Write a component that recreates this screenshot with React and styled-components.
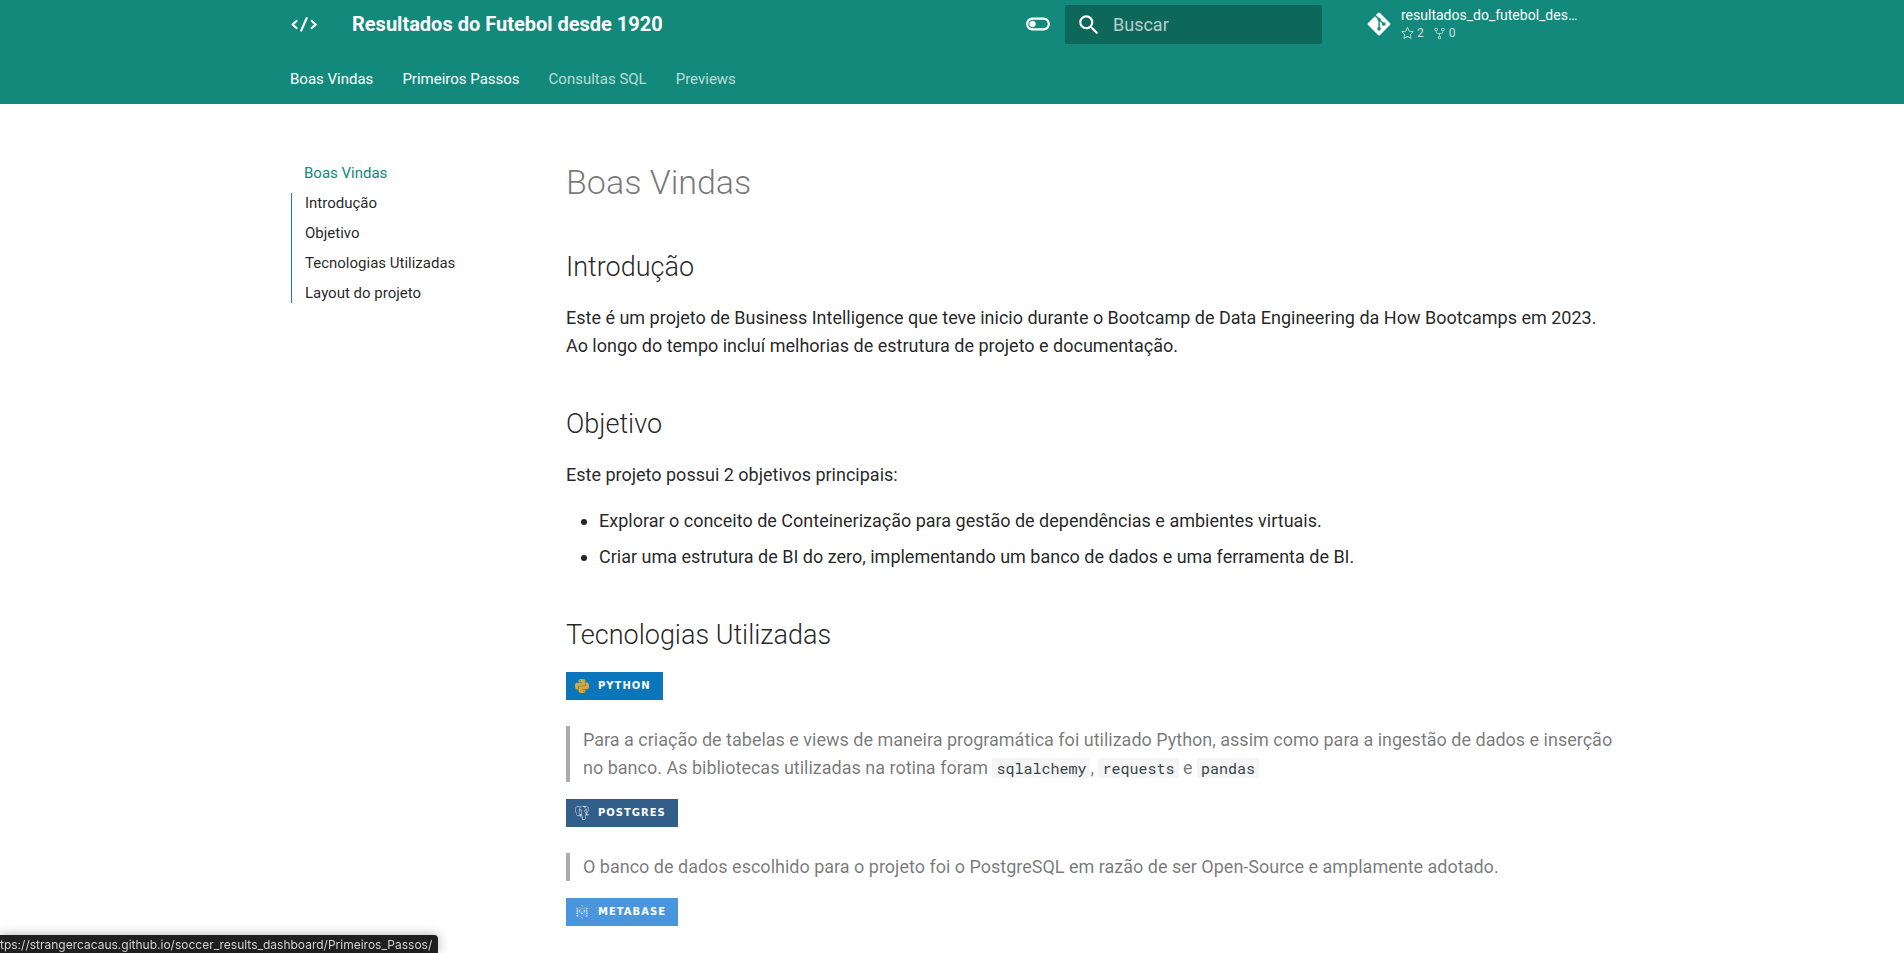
import React from "react";
import styled, { createGlobalStyle } from "styled-components";
import { FaGitAlt } from "react-icons/fa";
import { GoStar, GoRepoForked } from "react-icons/go";
import { SiPython, SiPostgresql, SiMetabase } from "react-icons/si";
import { MdSearch } from "react-icons/md";

const TEAL = "#12897a";

const GlobalStyle = createGlobalStyle`
  *, *::before, *::after { box-sizing: border-box; }
  html, body { height: 100%; }
  body {
    margin: 0;
    overflow: hidden;
    background: #fff;
    color: rgba(0, 0, 0, 0.87);
    font-family: Roboto, "Liberation Sans", sans-serif;
    font-size: 18px;
    line-height: 28px;
    -webkit-font-smoothing: antialiased;
  }
  a { color: inherit; text-decoration: none; }
  ul { margin: 0; padding: 0; }
`;

const Header = styled.header`
  background: ${TEAL};
  color: #fff;
`;

const Grid = styled.div`
  max-width: 1342px;
  margin: 0 auto;
`;

const TopBar = styled(Grid)`
  display: flex;
  align-items: center;
  height: 48px;
  padding-left: 9px;
`;

const Logo = styled.a`
  display: flex;
  width: 62px;
`;

const SiteTitle = styled.span`
  flex: 1;
  font-size: 20px;
  font-weight: 700;
`;

const IconButton = styled.button`
  display: flex;
  padding: 0;
  margin-right: 14px;
  border: 0;
  background: none;
  color: inherit;
  cursor: pointer;
`;

const Search = styled.label`
  display: flex;
  align-items: center;
  gap: 11px;
  width: 257px;
  height: 39px;
  margin-top: 1px;
  padding: 0 11px;
  border-radius: 2px;
  background: #0d675a;
`;

const SearchInput = styled.input`
  min-width: 0;
  flex: 1;
  padding: 0;
  border: 0;
  outline: 0;
  background: none;
  color: #fff;
  font: inherit;
  &::placeholder { color: rgba(255, 255, 255, 0.7); opacity: 1; }
`;

const Source = styled.a`
  display: flex;
  align-items: center;
  gap: 9px;
  width: 257px;
  margin-left: 44px;
`;

const SourceText = styled.span`
  display: grid;
  width: 183px;
  font-size: 14px;
  line-height: 18px;
`;

const RepoName = styled.span`
  overflow: hidden;
  white-space: nowrap;
  text-overflow: ellipsis;
`;

const Facts = styled.span`
  display: flex;
  gap: 9px;
  font-size: 12px;
  opacity: 0.75;
`;

const Fact = styled.span`
  display: flex;
  align-items: center;
  gap: 3px;
`;

const Tabs = styled(Grid).attrs({ as: "nav" })`
  display: flex;
  gap: 29px;
  height: 56px;
  padding: 16px 9px 0;
  font-size: 15px;
  line-height: 30px;
`;

const Tab = styled.a`
  opacity: ${(p) => (p.$bright ? 1 : 0.7)};
`;

const Main = styled(Grid)`
  display: flex;
`;

const Sidebar = styled.nav`
  flex: none;
  width: 266px;
  padding: 59px 10px 0;
  font-size: 15px;
  line-height: 20px;
`;

const Current = styled.a`
  display: block;
  margin: 0 0 10px 13px;
  color: ${TEAL};
`;

const Toc = styled.ul`
  display: grid;
  gap: 10px;
  padding-left: 13px;
  border-left: 1px solid ${TEAL};
  list-style: none;
`;

const Article = styled.article`
  flex: 1;
  min-width: 0;
  padding: 55px 4px 24px 19px;
`;

const H1 = styled.h1`
  margin: 0 0 43px;
  color: rgba(0, 0, 0, 0.54);
  font-size: 34px;
  font-weight: 300;
  line-height: 46px;
`;

const H2 = styled.h2`
  margin: 0 0 18px;
  font-size: 27px;
  font-weight: 300;
  line-height: 38px;
`;

const Paragraph = styled.p`
  margin: 0 0 45px;
`;

const Lead = styled.p`
  margin: 0 0 18px;
`;

const Bullets = styled.ul`
  display: grid;
  gap: 8px;
  margin: 0 0 45px;
  padding-left: 33px;
`;

const Quote = styled.blockquote`
  margin: 0 0 17px;
  padding-left: 13px;
  border-left: 4px solid rgba(0, 0, 0, 0.32);
  color: rgba(0, 0, 0, 0.54);
`;

const Code = styled.code`
  display: inline-block;
  padding: 0 4px;
  border-radius: 2px;
  background: #f5f5f5;
  color: #36464e;
  font-family: "Roboto Mono", "DejaVu Sans Mono", monospace;
  font-size: 15px;
  line-height: 20px;
`;

const Badge = styled.a`
  display: flex;
  align-items: center;
  gap: 9px;
  width: fit-content;
  height: 28px;
  margin-bottom: 26px;
  padding: 0 12px 0 9px;
  background: ${(p) => p.$color};
  color: #fff;
  font-family: Verdana, "DejaVu Sans", sans-serif;
  font-size: 10px;
  font-weight: 700;
  letter-spacing: 1px;
`;

const StatusUrl = styled.div`
  position: fixed;
  left: 0;
  bottom: 0;
  height: 18px;
  padding-right: 6px;
  border-radius: 0 4px 0 0;
  background: #1f1f1f;
  box-shadow: 0 0 12px rgba(0, 0, 0, 0.3);
  color: #d2d2d2;
  font-family: Inter, sans-serif;
  font-size: 12px;
  line-height: 20px;
  white-space: nowrap;
`;

const CodeIcon = () => (
  <svg width="28" height="16" viewBox="0 0 28 16" fill="none" stroke="currentColor" strokeWidth="2.2" strokeLinecap="round" strokeLinejoin="round" aria-hidden="true">
    <path d="M6.5 5 2.6 8.5l3.9 3.5M21.8 5l3.9 3.5-3.9 3.5M16.6 2.2l-5.4 12.4" />
  </svg>
);

const ToggleIcon = () => (
  <svg width="26" height="26" viewBox="0 0 24 24" fill="currentColor" aria-hidden="true">
    <path d="M17 6H7c-3.31 0-6 2.69-6 6s2.69 6 6 6h10c3.31 0 6-2.69 6-6s-2.69-6-6-6zm0 10H7c-2.21 0-4-1.79-4-4s1.79-4 4-4h10c2.21 0 4 1.79 4 4s-1.79 4-4 4zM7 9c-1.66 0-3 1.34-3 3s1.34 3 3 3 3-1.34 3-3-1.34-3-3-3z" />
  </svg>
);

const tabs = [
  ["Boas Vindas", true],
  ["Primeiros Passos", true],
  ["Consultas SQL", false],
  ["Previews", false],
];

const sections = ["Introdução", "Objetivo", "Tecnologias Utilizadas", "Layout do projeto"];

export default function App() {
  return (
    <>
      <GlobalStyle />
      <Header>
        <TopBar>
          <Logo href="#" aria-label="Início"><CodeIcon /></Logo>
          <SiteTitle>Resultados do Futebol desde 1920</SiteTitle>
          <IconButton type="button" aria-label="Alternar tema"><ToggleIcon /></IconButton>
          <Search>
            <MdSearch size={26} aria-hidden="true" />
            <SearchInput type="text" placeholder="Buscar" aria-label="Buscar" />
          </Search>
          <Source href="#">
            <FaGitAlt size={26} />
            <SourceText>
              <RepoName>resultados_do_futebol_des…</RepoName>
              <Facts>
                <Fact><GoStar size={13} />2</Fact>
                <Fact><GoRepoForked size={13} />0</Fact>
              </Facts>
            </SourceText>
          </Source>
        </TopBar>
        <Tabs>
          {tabs.map(([label, bright]) => (
            <Tab key={label} href="#" $bright={bright}>{label}</Tab>
          ))}
        </Tabs>
      </Header>
      <Main>
        <Sidebar>
          <Current href="#">Boas Vindas</Current>
          <Toc>
            {sections.map((s) => <li key={s}><a href="#">{s}</a></li>)}
          </Toc>
        </Sidebar>
        <Article>
          <H1>Boas Vindas</H1>
          <H2>Introdução</H2>
          <Paragraph>
            Este é um projeto de Business Intelligence que teve inicio durante o Bootcamp de Data Engineering da How Bootcamps em 2023.
            <br />
            Ao longo do tempo incluí melhorias de estrutura de projeto e documentação.
          </Paragraph>
          <H2>Objetivo</H2>
          <Lead>Este projeto possui 2 objetivos principais:</Lead>
          <Bullets>
            <li>Explorar o conceito de Conteinerização para gestão de dependências e ambientes virtuais.</li>
            <li>Criar uma estrutura de BI do zero, implementando um banco de dados e uma ferramenta de BI.</li>
          </Bullets>
          <H2>Tecnologias Utilizadas</H2>
          <Badge href="#" $color="#0b76bc"><SiPython size={14} color="#dda72f" />PYTHON</Badge>
          <Quote>
            Para a criação de tabelas e views de maneira programática foi utilizado Python, assim como para a ingestão de dados e inserção no banco. As bibliotecas utilizadas na rotina foram <Code>sqlalchemy</Code>, <Code>requests</Code> e <Code>pandas</Code>
          </Quote>
          <Badge href="#" $color="#325e8a"><SiPostgresql size={14} />POSTGRES</Badge>
          <Quote>
            O banco de dados escolhido para o projeto foi o PostgreSQL em razão de ser Open-Source e amplamente adotado.
          </Quote>
          <Badge href="#" $color="#4996dc"><SiMetabase size={14} />METABASE</Badge>
        </Article>
      </Main>
      <StatusUrl>tps://strangercacaus.github.io/soccer_results_dashboard/Primeiros_Passos/</StatusUrl>
    </>
  );
}
